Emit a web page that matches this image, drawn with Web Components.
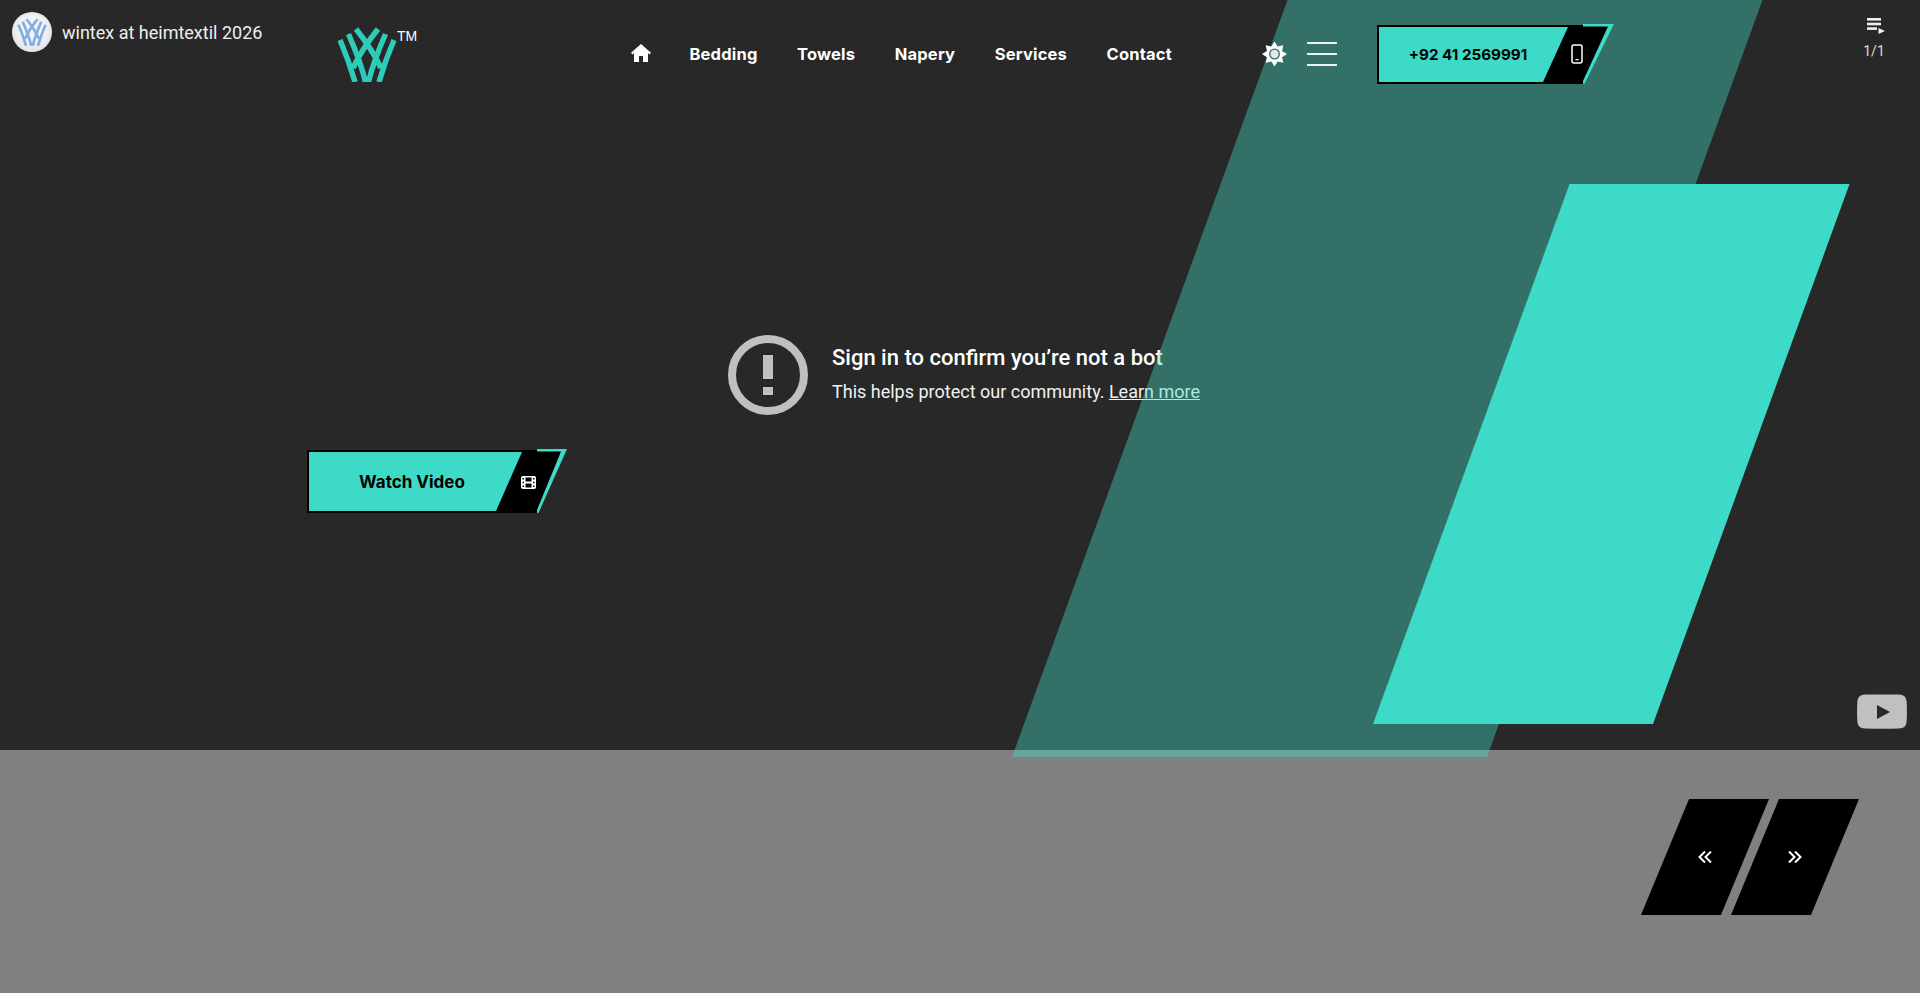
<!DOCTYPE html>
<html lang="en">
<head>
<meta charset="utf-8">
<title>Wintex</title>
<style>
  html, body { margin: 0; padding: 0; background: #808080; }
  body { font-family: "Inter", "Liberation Sans", sans-serif; }
</style>
</head>
<body>
<wintex-page></wintex-page>
<script>
// logo mark, colour comes in through --mark
const markTemplate = document.createElement('template');
markTemplate.innerHTML = `
  <style>
    :host { display: block; flex: none; width: 60px; height: 55px; }
    svg { display: block; width: 100%; height: 100%; }
    path { fill: none; stroke: var(--mark, #2ecbb8); stroke-width: 5.5; }
  </style>
  <svg viewBox="0 0 60 55">
    <path d="M3 13 C9 27 14 41 18 55"/>
    <path d="M57 13 C51 27 46 41 42 55"/>
    <path d="M11.5 7 C18 22 25 40 28.5 55"/>
    <path d="M48.5 7 C42 22 35 40 31.5 55"/>
    <path d="M19 2 C27 12 37 26 44 41"/>
    <path d="M41 2 C33 12 23 26 16 41"/>
  </svg>
`;
class WintexMark extends HTMLElement {
  constructor() {
    super();
    this.attachShadow({ mode: 'open' }).appendChild(markTemplate.content.cloneNode(true));
  }
}
customElements.define('wintex-mark', WintexMark);

// youtube error layer that sits under everything in the hero
const embedTemplate = document.createElement('template');
embedTemplate.innerHTML = `
  <style>
    :host {
      position: absolute; inset: 0;
      display: block;
      font-family: "Roboto", "Liberation Sans", sans-serif;
      color: #fff;
    }
    .top { display: flex; align-items: flex-start; padding: 12px 0 0 12px; }
    .avatar {
      width: 40px; height: 40px; border-radius: 50%;
      background: radial-gradient(circle at 50% 45%, #f2f4f7 40%, #d4d6d9 100%);
      overflow: hidden;
      display: flex; align-items: center; justify-content: center;
      --mark: #84ade2;
    }
    .avatar wintex-mark { width: 30px; height: 28px; }
    .title { margin: 10px 0 0 10px; font-size: 18px; line-height: 22px; color: #eee; }
    .count {
      position: absolute; top: 17px; right: 34px; width: 24px;
      display: flex; flex-direction: column; align-items: center; gap: 9px;
      font-size: 14px; line-height: 16px; color: #ddd;
    }
    .count svg { display: block; margin-left: 4px; }
    .error {
      position: absolute; left: 728px; top: 335px;
      display: flex; align-items: center; gap: 24px;
    }
    .error h2 { margin: 0; font-size: 22px; line-height: 30px; font-weight: 500; }
    .error p { margin: 6px 0 2px; font-size: 18px; line-height: 26px; color: #f1f1f1; }
    .error a { color: inherit; text-decoration: underline; }
    .yt { position: absolute; left: 1857px; top: 694px; display: block; }
  </style>
  <div class="top">
    <div class="avatar"><wintex-mark></wintex-mark></div>
    <div class="title">wintex at heimtextil 2026</div>
  </div>
  <div class="count">
    <svg width="18" height="17" viewBox="0 0 18 17" fill="#eee">
      <rect x="0" y="1" width="14" height="2.6"/>
      <rect x="0" y="5.7" width="14" height="2.6"/>
      <rect x="0" y="10.3" width="10" height="2.6"/>
      <path d="M11.5 11 L18 14 L11.5 17 Z"/>
    </svg>
    <span>1/1</span>
  </div>
  <div class="error">
    <svg width="80" height="80" viewBox="0 0 80 80">
      <circle cx="40" cy="40" r="36" fill="none" stroke="#c0c0c0" stroke-width="8"/>
      <rect x="35" y="20" width="10" height="24" fill="#c0c0c0"/>
      <rect x="35" y="52" width="10" height="8" fill="#c0c0c0"/>
    </svg>
    <div>
      <h2>Sign in to confirm you’re not a bot</h2>
      <p>This helps protect our community. <a href="#">Learn more</a></p>
    </div>
  </div>
  <svg class="yt" width="50" height="35" viewBox="0 0 50 35">
    <path d="M8 0.5 H42 Q49 0.5 49.6 7 Q50.2 17.5 49.6 28 Q49 34.5 42 34.5 Q25 35.2 8 34.5 Q1 34.5 0.4 28 Q-0.2 17.5 0.4 7 Q1 0.5 8 0.5 Z" fill="#c0c0c0"/>
    <path d="M20 11 L33 18 L20 25 Z" fill="#282828"/>
  </svg>
`;
class YtEmbed extends HTMLElement {
  constructor() {
    super();
    this.attachShadow({ mode: 'open' }).appendChild(embedTemplate.content.cloneNode(true));
  }
}
customElements.define('yt-embed', YtEmbed);

// skewed panel, placed free on the hero
const panelTemplate = document.createElement('template');
panelTemplate.innerHTML = `
  <style>
    :host {
      position: absolute;
      display: block;
      transform: skewX(-20deg);
      transform-origin: 0 100%;
      background: var(--panel, #3ddbc7);
    }
  </style>
`;
class SlantPanel extends HTMLElement {
  constructor() {
    super();
    this.attachShadow({ mode: 'open' }).appendChild(panelTemplate.content.cloneNode(true));
  }
}
customElements.define('slant-panel', SlantPanel);

// cta with the black tail and turquoise corner
const buttonTemplate = document.createElement('template');
buttonTemplate.innerHTML = `
  <style>
    :host { display: block; position: relative; width: var(--w); height: var(--h); color: #000; }
    svg.bg { position: absolute; inset: 0; width: 100%; height: 100%; }
    .label {
      position: absolute; top: var(--label-top, 0); bottom: 0; left: 0; width: var(--label-w);
      display: flex; align-items: center; justify-content: center;
      font-weight: 700; font-size: var(--fs);
      letter-spacing: var(--ls, 0);
    }
    .icon { position: absolute; left: var(--icon-x); top: var(--icon-y); display: block; line-height: 0; }
  </style>
  <svg class="bg" preserveAspectRatio="none"></svg>
  <div class="label"><slot></slot></div>
  <div class="icon"><slot name="icon"></slot></div>
`;
class SlantButton extends HTMLElement {
  constructor() {
    super();
    this.attachShadow({ mode: 'open' }).appendChild(buttonTemplate.content.cloneNode(true));
  }

  connectedCallback() {
    const w = +this.getAttribute('w');
    const h = +this.getAttribute('h');
    const tail = +this.getAttribute('tail'); // where the black box ends
    const top = +this.getAttribute('fill-top');
    const bottom = +this.getAttribute('fill-bottom');
    const edge = +this.getAttribute('edge') || 2;
    const svg = this.shadowRoot.querySelector('svg.bg');
    svg.setAttribute('viewBox', `0 0 ${w} ${h}`);
    svg.innerHTML = `
      <polygon fill="#3ddbc7" points="${tail},0 ${w},0 ${tail + 1.5},${h} ${tail},${h}"/>
      <polygon fill="#000" points="0,1 ${tail},1 ${tail},2.5 ${w - 6},2.5 ${tail},${h - 3} ${tail},${h} 0,${h}"/>
      <polygon fill="#3ddbc7" points="${edge},${edge + 1} ${top},${edge + 1} ${bottom},${h - edge} ${edge},${h - edge}"/>
    `;
  }
}
customElements.define('slant-button', SlantButton);

const headerTemplate = document.createElement('template');
headerTemplate.innerHTML = `
  <style>
    :host {
      display: flex; align-items: center;
      height: 60px;
      padding: 24px 0 0 337px;
      color: #fff;
      font-family: "Inter", "Liberation Sans", sans-serif;
    }
    .brand { display: flex; align-items: flex-start; flex: none; width: 77px; height: 55px; margin-right: 216px; }
    .brand sup { font: 14px/14px "Liberation Sans", sans-serif; margin: 2px 0 0 0; }
    nav {
      display: flex; align-items: center; justify-content: space-between;
      width: 542px; margin-right: 90px;
      font-size: 16.5px; font-weight: 700; letter-spacing: .2px;
    }
    nav svg { display: block; margin: 0 -1px 2px 1px; }
    nav a { color: inherit; text-decoration: none; }
    .sun { display: block; margin-right: 20px; }
    .burger { display: flex; flex-direction: column; gap: 9.5px; width: 30px; margin-right: 40px; }
    .burger i { display: block; height: 1.5px; background: #e8f4f1; }
  </style>
  <div class="brand"><wintex-mark></wintex-mark><sup>TM</sup></div>
  <nav>
    <svg width="20" height="18" viewBox="0 0 20 18" fill="#fff">
      <path d="M10 0 L20 8.8 L18.6 10.4 L17 9 V18 H12 V12 H8 V18 H3 V9 L1.4 10.4 L0 8.8 Z"/>
    </svg>
    <a href="#">Bedding</a>
    <a href="#">Towels</a>
    <a href="#">Napery</a>
    <a href="#">Services</a>
    <a href="#">Contact</a>
  </nav>
  <svg class="sun" width="25" height="26" viewBox="-13 -13 26 26">
    <polygon fill="#fff" points="0,-13 3.25,-7.85 9.2,-9.2 7.85,-3.25 13,0 7.85,3.25 9.2,9.2 3.25,7.85 0,13 -3.25,7.85 -9.2,9.2 -7.85,3.25 -13,0 -7.85,-3.25 -9.2,-9.2 -3.25,-7.85"/>
    <circle r="5" fill="#dfe9e7" stroke="#3c6f68" stroke-width="1.4"/>
  </svg>
  <div class="burger"><i></i><i></i><i></i></div>
  <slot></slot>
`;
class SiteHeader extends HTMLElement {
  constructor() {
    super();
    this.attachShadow({ mode: 'open' }).appendChild(headerTemplate.content.cloneNode(true));
  }
}
customElements.define('site-header', SiteHeader);

// prev / next in the grey strip
const arrowTemplate = document.createElement('template');
arrowTemplate.innerHTML = `
  <style>
    :host {
      display: flex; align-items: center; justify-content: center;
      width: 80px; height: 116px;
      background: #000;
      transform: skewX(-22.5deg);
    }
    svg { display: block; transform: skewX(22.5deg); }
    polyline { fill: none; stroke: #fff; stroke-width: 2; }
  </style>
  <svg width="14" height="12" viewBox="0 0 14 12"></svg>
`;
class ArrowButton extends HTMLElement {
  constructor() {
    super();
    this.attachShadow({ mode: 'open' }).appendChild(arrowTemplate.content.cloneNode(true));
  }

  connectedCallback() {
    const svg = this.shadowRoot.querySelector('svg');
    svg.innerHTML = this.getAttribute('dir') === 'next'
      ? '<polyline points="1,0.5 6.5,6 1,11.5"/><polyline points="7,0.5 12.5,6 7,11.5"/>'
      : '<polyline points="7,0.5 1.5,6 7,11.5"/><polyline points="13,0.5 7.5,6 13,11.5"/>';
  }
}
customElements.define('arrow-button', ArrowButton);

const pageTemplate = document.createElement('template');
pageTemplate.innerHTML = `
  <style>
    :host {
      display: grid; grid-template-rows: 750px 1fr;
      height: 100vh; overflow: hidden;
    }
    .hero { position: relative; background: #282828; z-index: 1; }
    .fade { left: 1012px; top: 0; width: 475px; height: 757px; --panel: rgba(64, 220, 200, .4); }
    .solid { left: 1373px; top: 184px; width: 280px; height: 540px; }
    .content { position: relative; }
    .cta { padding: 365px 0 0 307px; }
    .watch { --w: 260px; --h: 64px; --label-w: 210px; --label-top: 2px; --fs: 17px; --icon-x: 214px; --icon-y: 27px; }
    .phone { --w: 237px; --h: 60px; --label-w: 182px; --fs: 15.2px; --icon-x: 194px; --icon-y: 20px; }
    .strip { display: flex; justify-content: flex-end; gap: 10px; padding: 49px 85px 0 0; }
    svg { display: block; }
  </style>
  <section class="hero">
    <yt-embed></yt-embed>
    <slant-panel class="fade"></slant-panel>
    <slant-panel class="solid"></slant-panel>
    <div class="content">
      <site-header>
        <slant-button class="phone" w="237" h="60" tail="206" fill-top="191" fill-bottom="166" edge="2">
          +92 41 2569991
          <svg slot="icon" width="12" height="20" viewBox="0 0 12 20">
            <rect x="1" y="1" width="10" height="18" rx="2" fill="none" stroke="#fff" stroke-width="1.5"/>
            <rect x="4.5" y="15" width="3" height="1.3" fill="#fff"/>
          </svg>
        </slant-button>
      </site-header>
      <div class="cta">
        <slant-button class="watch" w="260" h="64" tail="230" fill-top="215" fill-bottom="189" edge="2">
          Watch Video
          <svg slot="icon" width="15" height="13" viewBox="0 0 15 13">
            <rect width="15" height="13" rx="2" fill="#fff"/>
            <g fill="#000">
              <rect x="1.5" y="2" width="1.5" height="1.5"/>
              <rect x="1.5" y="5.7" width="1.5" height="1.5"/>
              <rect x="1.5" y="9.5" width="1.5" height="1.5"/>
              <rect x="12" y="2" width="1.5" height="1.5"/>
              <rect x="12" y="5.7" width="1.5" height="1.5"/>
              <rect x="12" y="9.5" width="1.5" height="1.5"/>
              <rect x="4.5" y="1.5" width="6" height="4"/>
              <rect x="4.5" y="7.5" width="6" height="4"/>
            </g>
          </svg>
        </slant-button>
      </div>
    </div>
  </section>
  <section class="strip">
    <arrow-button dir="prev"></arrow-button>
    <arrow-button dir="next"></arrow-button>
  </section>
`;
class WintexPage extends HTMLElement {
  constructor() {
    super();
    this.attachShadow({ mode: 'open' }).appendChild(pageTemplate.content.cloneNode(true));
  }
}
customElements.define('wintex-page', WintexPage);
</script>
</body>
</html>
